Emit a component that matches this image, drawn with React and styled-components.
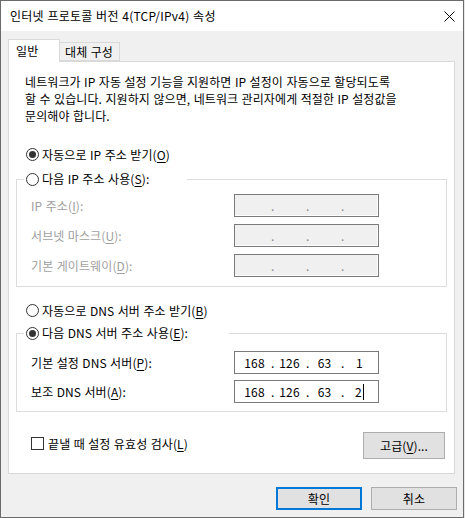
import React from 'react';
import styled, { createGlobalStyle } from 'styled-components';

const GlobalStyle = createGlobalStyle`
  html, body {
    margin: 0;
    padding: 0;
    background: #e8e8e8;
  }
  body {
    font-family: 'Malgun Gothic', 'Noto Sans CJK KR', 'Noto Sans', sans-serif;
    font-size: 12px;
    letter-spacing: 0.1px;
    word-spacing: 0.6px;
    color: #000;
  }
  u {
    text-underline-offset: 2px;
  }
`;

const dnsServers = [
  { label: '기본 설정 DNS 서버', key: 'P', value: ['168', '126', '63', '1'] },
  { label: '보조 DNS 서버', key: 'A', value: ['168', '126', '63', '2'], focused: true },
];

const staticFields = [
  { label: 'IP 주소', key: 'I' },
  { label: '서브넷 마스크', key: 'U' },
  { label: '기본 게이트웨이', key: 'D' },
];

const Mnemonic = ({ text, hotkey, colon }) => (
  <span>
    {text}(<u>{hotkey}</u>){colon ? ':' : ''}
  </span>
);

const IpBox = ({ value, disabled, focused }) => {
  const parts = value || ['', '', '', ''];
  return (
    <IpField $disabled={disabled}>
      {parts.map((p, i) => (
        <React.Fragment key={i}>
          {i > 0 && <Dot $disabled={disabled}>.</Dot>}
          <Octet>
            {p}
            {focused && i === 3 && <Caret />}
          </Octet>
        </React.Fragment>
      ))}
    </IpField>
  );
};

const App = () => (
  <>
    <GlobalStyle />
    <Window>
      <TitleBar>
        <Title>인터넷 프로토콜 버전 4(TCP/IPv4) 속성</Title>
        <svg width="11" height="11" viewBox="0 0 11 11">
          <path d="M0.5 0.5 L10.5 10.5 M10.5 0.5 L0.5 10.5" stroke="#000" strokeWidth="1" fill="none" />
        </svg>
      </TitleBar>

      <Body>
        <Tabs>
          <Tab $active>일반</Tab>
          <Tab>대체 구성</Tab>
        </Tabs>

        <Panel>
          <Description>
            네트워크가 IP 자동 설정 기능을 지원하면 IP 설정이 자동으로 할당되도록
            <br />
            할 수 있습니다. 지원하지 않으면, 네트워크 관리자에게 적절한 IP 설정값을
            <br />
            문의해야 합니다.
          </Description>

          <RadioRow $top={22}>
            <Radio $checked />
            <Mnemonic text="자동으로 IP 주소 받기" hotkey="O" />
          </RadioRow>

          <Group $top={8}>
            <Legend $width={163}>
              <Radio />
              <Mnemonic text="다음 IP 주소 사용" hotkey="S" colon />
            </Legend>
            <FieldGrid $padTop={7} $padBottom={9} $gap={7}>
              {staticFields.map((f) => (
                <React.Fragment key={f.key}>
                  <FieldLabel $disabled>
                    <Mnemonic text={f.label} hotkey={f.key} colon />
                  </FieldLabel>
                  <IpBox disabled />
                </React.Fragment>
              ))}
            </FieldGrid>
          </Group>

          <RadioRow $top={15}>
            <Radio />
            <Mnemonic text="자동으로 DNS 서버 주소 받기" hotkey="B" />
          </RadioRow>

          <Group $top={6}>
            <Legend $width={205}>
              <Radio $checked />
              <Mnemonic text="다음 DNS 서버 주소 사용" hotkey="E" colon />
            </Legend>
            <FieldGrid $padTop={10} $padBottom={8} $gap={6}>
              {dnsServers.map((f) => (
                <React.Fragment key={f.key}>
                  <FieldLabel>
                    <Mnemonic text={f.label} hotkey={f.key} colon />
                  </FieldLabel>
                  <IpBox value={f.value} focused={f.focused} />
                </React.Fragment>
              ))}
            </FieldGrid>
          </Group>

          <OptionsRow>
            <CheckLabel>
              <CheckBox />
              <Mnemonic text="끝낼 때 설정 유효성 검사" hotkey="L" />
            </CheckLabel>
            <Button $width={82} $height={27}>
              <span>
                고급(<u>V</u>)...
              </span>
            </Button>
          </OptionsRow>
        </Panel>
      </Body>

      <Footer>
        <Button $width={86} $height={23} $default>
          확인
        </Button>
        <Button $width={86} $height={23}>
          취소
        </Button>
      </Footer>
    </Window>
  </>
);

export default App;

const Window = styled.div`
  width: 464px;
  height: 518px;
  box-sizing: border-box;
  border: 1px solid #6b6b6b;
  background: #f0f0f0;
  display: flex;
  flex-direction: column;
`;

const TitleBar = styled.div`
  height: 30px;
  background: #fff;
  display: flex;
  align-items: center;
  justify-content: space-between;
  padding: 0 8px 0 9px;
  flex-shrink: 0;
`;

const Title = styled.span`
  line-height: 16px;
  white-space: nowrap;
  letter-spacing: 0.25px;
`;

const Body = styled.div`
  padding: 8px 8px 0 7px;
`;

const Tabs = styled.div`
  display: flex;
  align-items: flex-end;
  height: 22px;
`;

const Tab = styled.div`
  position: relative;
  box-sizing: border-box;
  border: 1px solid #d9d9d9;
  border-bottom: ${(p) => (p.$active ? 'none' : '1px solid #d9d9d9')};
  background: ${(p) => (p.$active ? '#fff' : '#f0f0f0')};
  height: ${(p) => (p.$active ? '23px' : '19px')};
  margin-bottom: ${(p) => (p.$active ? '-1px' : '0')};
  margin-left: ${(p) => (p.$active ? '0' : '-1px')};
  z-index: ${(p) => (p.$active ? 1 : 0)};
  padding: ${(p) => (p.$active ? '2px 0 0 7px' : '0 0 0 5px')};
  width: ${(p) => (p.$active ? '52px' : '61px')};
  line-height: 17px;
  white-space: nowrap;
`;

const Panel = styled.div`
  box-sizing: border-box;
  height: 413px;
  background: #fff;
  border: 1px solid #d9d9d9;
  padding: 11px 7px 0 7px;
`;

const Description = styled.p`
  margin: 0 0 0 9px;
  line-height: 17px;
  white-space: nowrap;
`;

const RadioRow = styled.div`
  display: flex;
  align-items: center;
  gap: 3px;
  height: 17px;
  margin: ${(p) => p.$top}px 0 0 10px;
  white-space: nowrap;
`;

const Radio = styled.span`
  position: relative;
  width: 13px;
  height: 13px;
  box-sizing: border-box;
  border: 1px solid #333;
  border-radius: 50%;
  background: #fff;
  flex-shrink: 0;

  &::after {
    content: '';
    display: ${(p) => (p.$checked ? 'block' : 'none')};
    position: absolute;
    left: 2px;
    top: 2px;
    width: 7px;
    height: 7px;
    border-radius: 50%;
    background: #333;
  }
`;

const Group = styled.fieldset`
  margin: ${(p) => p.$top}px 0 0;
  padding: 0;
  min-width: 0;
  border: 1px solid #dcdcdc;
`;

const Legend = styled.legend`
  box-sizing: border-box;
  width: ${(p) => p.$width}px;
  height: 16px;
  margin-left: 7px;
  padding: 0 0 0 2px;
  display: flex;
  align-items: center;
  gap: 3px;
  line-height: 16px;
  white-space: nowrap;
`;

const FieldGrid = styled.div`
  display: grid;
  grid-template-columns: 203px 145px;
  grid-auto-rows: 23px;
  row-gap: ${(p) => p.$gap}px;
  align-items: center;
  padding: ${(p) => p.$padTop}px 0 ${(p) => p.$padBottom}px 14px;
`;

const FieldLabel = styled.span`
  color: ${(p) => (p.$disabled ? '#a0a0a0' : '#000')};
  line-height: 17px;
  white-space: nowrap;
`;

const IpField = styled.div`
  box-sizing: border-box;
  height: 23px;
  display: flex;
  align-items: center;
  padding-left: 3px;
  border: 1px solid #7a7a7a;
  background: ${(p) => (p.$disabled ? '#f0f0f0' : '#fff')};
  box-shadow: ${(p) => (p.$disabled ? 'inset -1px -1px 0 #fff' : 'none')};
  line-height: 17px;
`;

const Octet = styled.span`
  width: 33px;
  text-align: center;
  display: inline-flex;
  justify-content: center;
  align-items: center;
`;

const Dot = styled.span`
  width: 2px;
  text-align: center;
  color: ${(p) => (p.$disabled ? '#8a8a8a' : '#000')};
`;

const Caret = styled.span`
  display: inline-block;
  width: 1px;
  height: 16px;
  background: #000;
  margin-left: 1px;
`;

const OptionsRow = styled.div`
  display: flex;
  align-items: flex-start;
  justify-content: space-between;
  margin: 20px 2px 0 15px;
`;

const CheckLabel = styled.div`
  display: flex;
  align-items: center;
  gap: 4px;
  margin-top: 3px;
  height: 17px;
  white-space: nowrap;
`;

const CheckBox = styled.span`
  width: 13px;
  height: 13px;
  box-sizing: border-box;
  border: 1px solid #333;
  background: #fff;
`;

const Button = styled.div`
  box-sizing: border-box;
  width: ${(p) => p.$width}px;
  height: ${(p) => p.$height}px;
  display: flex;
  align-items: center;
  justify-content: center;
  background: #e1e1e1;
  border: ${(p) => (p.$default ? '2px solid #0078d7' : '1px solid #adadad')};
  line-height: 17px;
  white-space: nowrap;
`;

const Footer = styled.div`
  display: flex;
  justify-content: flex-end;
  gap: 9px;
  padding: 13px 6px 0 0;
`;
